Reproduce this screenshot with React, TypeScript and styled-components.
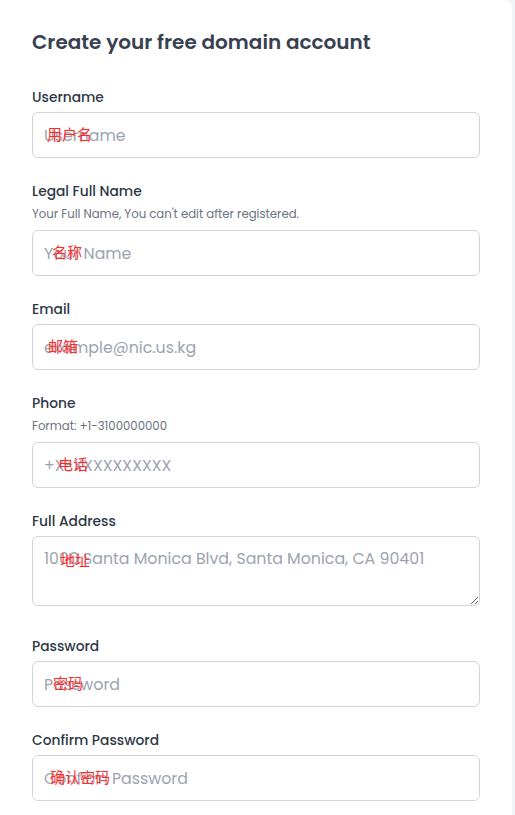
import styled, { createGlobalStyle } from "styled-components";
import type { FC } from "react";

const GlobalStyle = createGlobalStyle`
  html, body {
    margin: 0;
    padding: 0;
    background: #f3f4f6;
    font-family: Poppins, Inter, "Noto Sans", "Noto Sans CJK SC", sans-serif;
  }
  * { box-sizing: border-box; }
`;

type Field = {
  label: string;
  hint?: string;
  placeholder: string;
  note: string;
  noteX: number;
  type?: string;
  multiline?: boolean;
};

const fields: Field[] = [
  { label: "Username", placeholder: "Username", note: "用户名", noteX: 15 },
  {
    label: "Legal Full Name",
    hint: "Your Full Name, You can't edit after registered.",
    placeholder: "Your Name",
    note: "名称",
    noteX: 20,
  },
  { label: "Email", placeholder: "example@nic.us.kg", note: "邮箱", noteX: 16 },
  {
    label: "Phone",
    hint: "Format: +1-3100000000",
    placeholder: "+X-XXXXXXXXXX",
    note: "电话",
    noteX: 26,
  },
  {
    label: "Full Address",
    placeholder: "1000 Santa Monica Blvd, Santa Monica, CA 90401",
    note: "地址",
    noteX: 28,
    multiline: true,
  },
  { label: "Password", placeholder: "Password", note: "密码", noteX: 21, type: "password" },
  {
    label: "Confirm Password",
    placeholder: "Confirm Password",
    note: "确认密码",
    noteX: 18,
    type: "password",
  },
];

const App: FC = () => {
  return (
    <>
      <GlobalStyle />
      <Scard>
        <Stitle>Create your free domain account</Stitle>
        {fields.map((f) => (
          <Sgroup key={f.label}>
            <Slabel>{f.label}</Slabel>
            {f.hint && <Shint>{f.hint}</Shint>}
            <Swrap>
              {f.multiline ? (
                <Stextarea placeholder={f.placeholder} />
              ) : (
                <Sinput type={f.type || "text"} placeholder={f.placeholder} />
              )}
              <Snote $x={f.noteX} $multi={!!f.multiline}>
                {f.note}
              </Snote>
            </Swrap>
          </Sgroup>
        ))}
      </Scard>
    </>
  );
};

export default App;

const Scard = styled.div`
  width: 512px;
  min-height: 815px;
  background: #fff;
  border-top-right-radius: 8px;
  padding: 28px 32px 24px 32px;
`;

const Stitle = styled.h2`
  margin: 0 0 32px 0;
  font-size: 20px;
  line-height: 28px;
  font-weight: 600;
  color: #374151;
`;

const Sgroup = styled.div`
  display: flex;
  flex-direction: column;
  margin-bottom: 24px;
`;

const Slabel = styled.label`
  font-size: 13.8px;
  line-height: 20px;
  font-weight: 500;
  color: #2d3748;
  margin-bottom: 4px;
`;

const Shint = styled.span`
  font-size: 11.7px;
  line-height: 16px;
  color: #6b7280;
  margin-bottom: 8px;
`;

const Swrap = styled.div`
  position: relative;
  width: 448px;
`;

const fieldCss = `
  display: block;
  width: 100%;
  border: 1px solid #d1d5db;
  border-radius: 6px;
  background: #fff;
  padding: 0 11px;
  font-family: inherit;
  font-size: 15.8px;
  color: #111827;
  outline: none;
  &::placeholder { color: #9ca3af; }
`;

const Sinput = styled.input`
  ${fieldCss}
  height: 46px;
`;

const Stextarea = styled.textarea`
  ${fieldCss}
  height: 70px;
  padding-top: 11px;
  line-height: 22px;
  resize: vertical;
  margin-bottom: 7px;
`;

const Snote = styled.span<{ $x: number; $multi: boolean }>`
  position: absolute;
  left: ${(p) => p.$x}px;
  top: ${(p) => (p.$multi ? "14px" : "12px")};
  font-size: 15px;
  line-height: 20px;
  font-weight: 400;
  color: #ff2a2a;
  pointer-events: none;
  font-family: "Noto Sans CJK SC", sans-serif;
`;
